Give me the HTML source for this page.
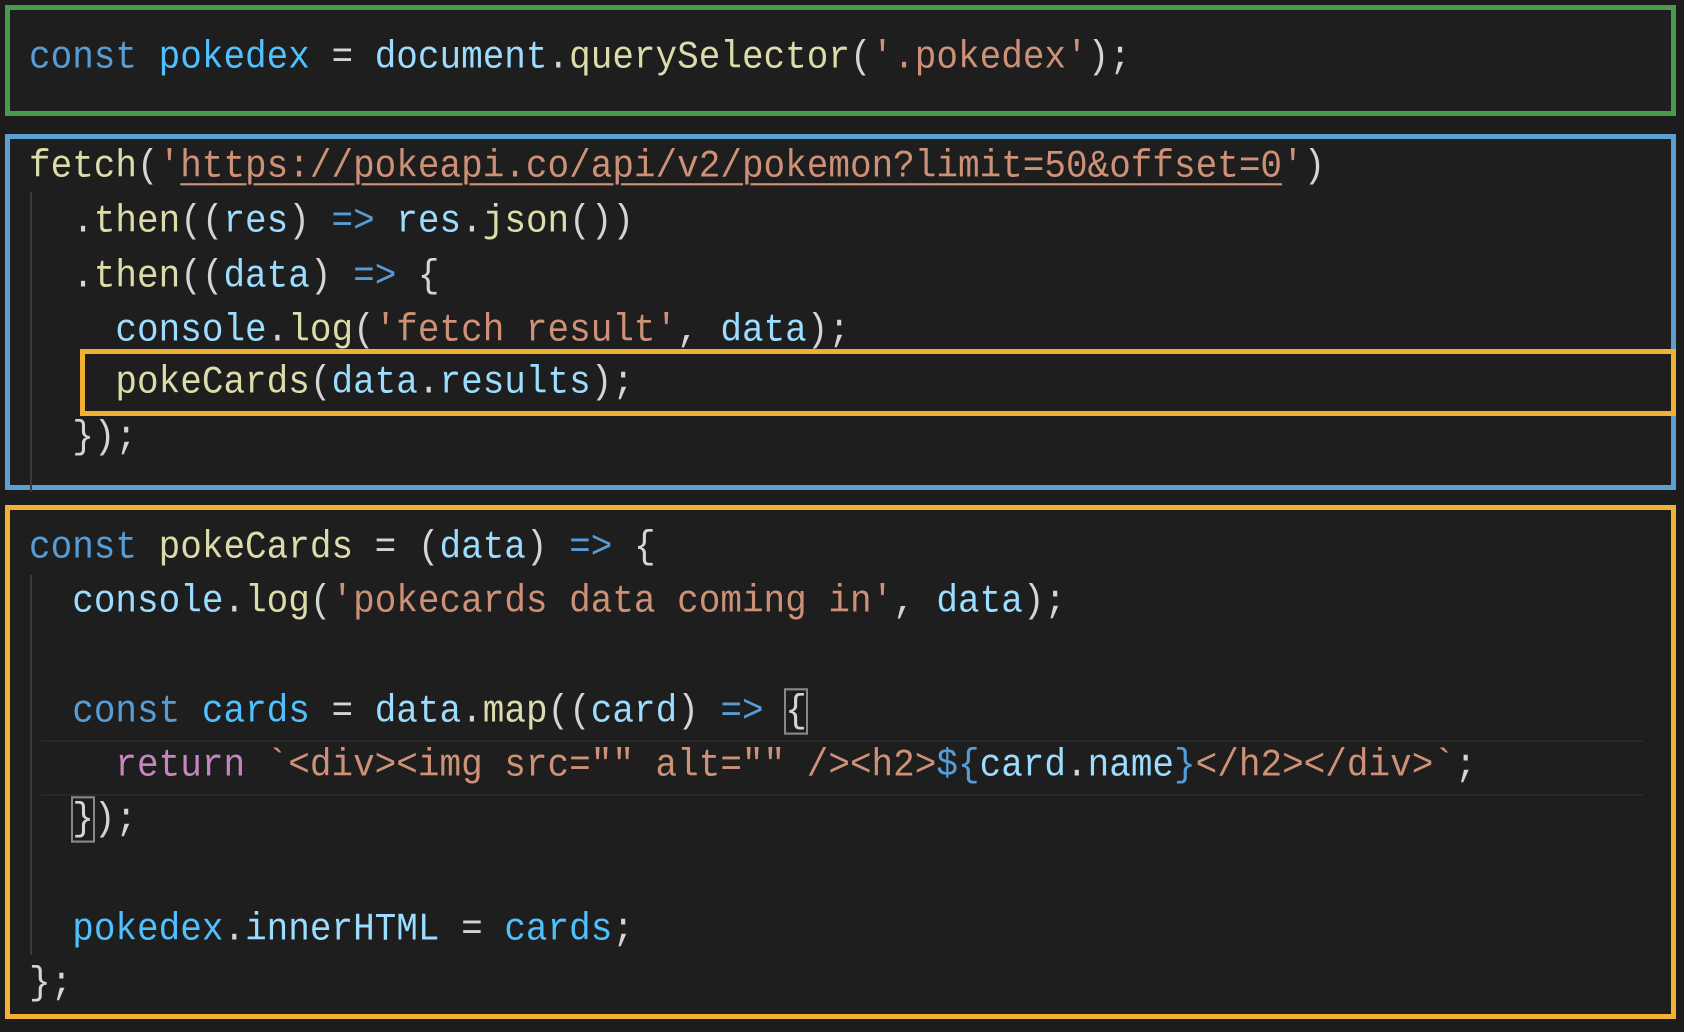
<!DOCTYPE html>
<html><head><meta charset="utf-8"><style>
html,body{margin:0;padding:0;}
body{width:1684px;height:1032px;background:#1c1c1c;position:relative;overflow:hidden;font-family:"Liberation Mono",monospace;font-size:36px;}
.box{position:absolute;box-sizing:border-box;background:#1e1e1e;}
.ln{position:absolute;left:29px;height:54px;line-height:54px;white-space:pre;color:#d4d4d4;transform:scaleY(1.08);transform-origin:0 50%;margin-top:2px;}
.k{color:#569cd6}.c{color:#4fc1ff}.v{color:#9cdcfe}.f{color:#dcdcaa}.s{color:#ce9178}.r{color:#c586c0}
.u{text-decoration:underline;text-decoration-color:#ce9178;text-underline-offset:6px;text-decoration-thickness:2px}
.guide{position:absolute;width:2px;background:#3a3a3a;}
.bb{outline:2px solid #888;outline-offset:-1px}
</style></head><body>
<div class="box" style="left:5px;top:5px;width:1671px;height:111px;border:5px solid #4b9a4b;"></div>
<div class="box" style="left:5px;top:134px;width:1671px;height:356px;border:5px solid #5c9fd0;"></div>
<div class="box" style="left:5px;top:505px;width:1671px;height:514px;border:5px solid #f2b134;"></div>
<div class="guide" style="left:30px;top:192px;height:300px"></div>
<div class="guide" style="left:30px;top:575px;height:380px"></div>
<div style="position:absolute;left:41px;top:740px;width:1602px;height:52px;border-top:2px solid #282828;border-bottom:2px solid #282828;"></div>
<div style="position:absolute;left:80px;top:349px;width:1596px;height:67px;box-sizing:border-box;border:5px solid #f2b134;"></div>

<div class="ln" style="top:29px"><span class="k">const</span> <span class="c">pokedex</span> = <span class="v">document</span>.<span class="f">querySelector</span>(<span class="s">'.pokedex'</span>);</div>

<div class="ln" style="top:138px"><span class="f">fetch</span>(<span class="s">'<span class="u">https://pokeapi.co/api/v2/pokemon?limit=50&amp;offset=0</span>'</span>)</div>
<div class="ln" style="top:193px">  .<span class="f">then</span>((<span class="v">res</span>) <span class="k">=&gt;</span> <span class="v">res</span>.<span class="f">json</span>())</div>
<div class="ln" style="top:248px">  .<span class="f">then</span>((<span class="v">data</span>) <span class="k">=&gt;</span> {</div>
<div class="ln" style="top:302px">    <span class="v">console</span>.<span class="f">log</span>(<span class="s">'fetch result'</span>, <span class="v">data</span>);</div>
<div class="ln" style="top:354px">    <span class="f">pokeCards</span>(<span class="v">data</span>.<span class="v">results</span>);</div>
<div class="ln" style="top:409px">  });</div>

<div class="ln" style="top:519px"><span class="k">const</span> <span class="f">pokeCards</span> = (<span class="v">data</span>) <span class="k">=&gt;</span> {</div>
<div class="ln" style="top:573px">  <span class="v">console</span>.<span class="f">log</span>(<span class="s">'pokecards data coming in'</span>, <span class="v">data</span>);</div>
<div class="ln" style="top:683px">  <span class="k">const</span> <span class="c">cards</span> = <span class="v">data</span>.<span class="f">map</span>((<span class="v">card</span>) <span class="k">=&gt;</span> <span class="bb">{</span></div>
<div class="ln" style="top:737px">    <span class="r">return</span> <span class="s">`&lt;div&gt;&lt;img src="" alt="" /&gt;&lt;h2&gt;</span><span class="k">${</span><span class="v">card</span>.<span class="v">name</span><span class="k">}</span><span class="s">&lt;/h2&gt;&lt;/div&gt;`</span>;</div>
<div class="ln" style="top:791px">  <span class="bb">}</span>);</div>
<div class="ln" style="top:901px">  <span class="c">pokedex</span>.<span class="v">innerHTML</span> = <span class="c">cards</span>;</div>
<div class="ln" style="top:955px">};</div>
</body></html>
